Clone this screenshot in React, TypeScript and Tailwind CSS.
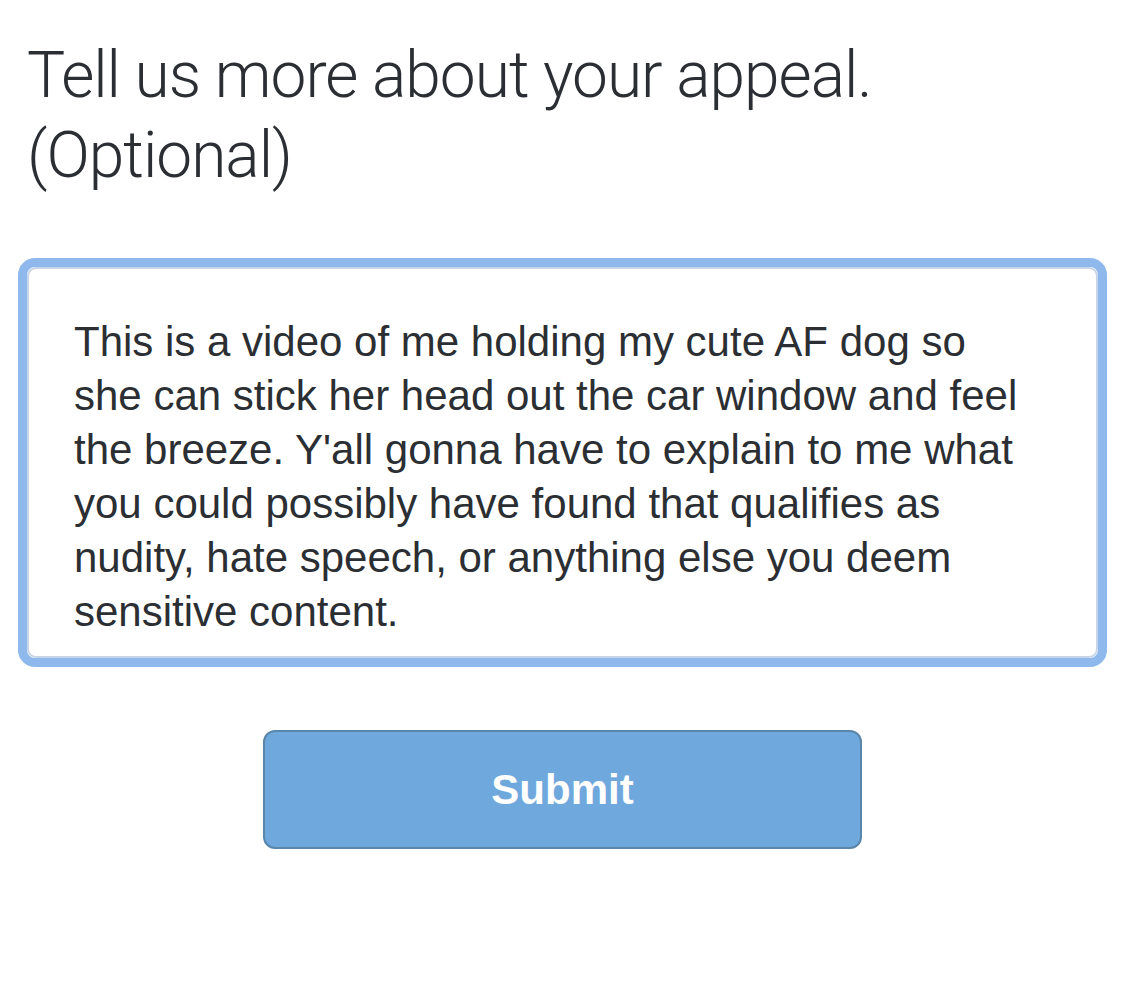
export default function App() {
  const body =
    "This is a video of me holding my cute AF dog so she can stick her head out the car window and feel the breeze. Y'all gonna have to explain to me what you could possibly have found that qualifies as nudity, hate speech, or anything else you deem sensitive content.";

  return (
    <div className="w-[1125px] h-[985px] bg-white px-[18px] pt-[36px] font-['Liberation_Sans',Arial,sans-serif] text-[#2b2f33]">
      <h1 className="pl-[9px] font-['Roboto',sans-serif] font-light text-[64px] leading-[80px] tracking-[-1px]">
        Tell us more about your appeal.
        <br />
        (Optional)
      </h1>

      {/* textarea with focus ring */}
      <div className="mt-[62px] rounded-[17px] border-[9px] border-[#8fb8ec]">
        <div className="rounded-[9px] border-2 border-[#c8d5e6] bg-white pl-[45px] pr-[55px] pt-[46px] pb-[17px] text-[42px] leading-[54px]">
          {body}
        </div>
      </div>

      <div className="mt-[63px] flex justify-center">
        <button className="w-[599px] h-[119px] rounded-[12px] border-2 border-[#5b86ab] bg-[#6fa8dd] text-white font-bold text-[42px]">
          Submit
        </button>
      </div>
    </div>
  );
}
